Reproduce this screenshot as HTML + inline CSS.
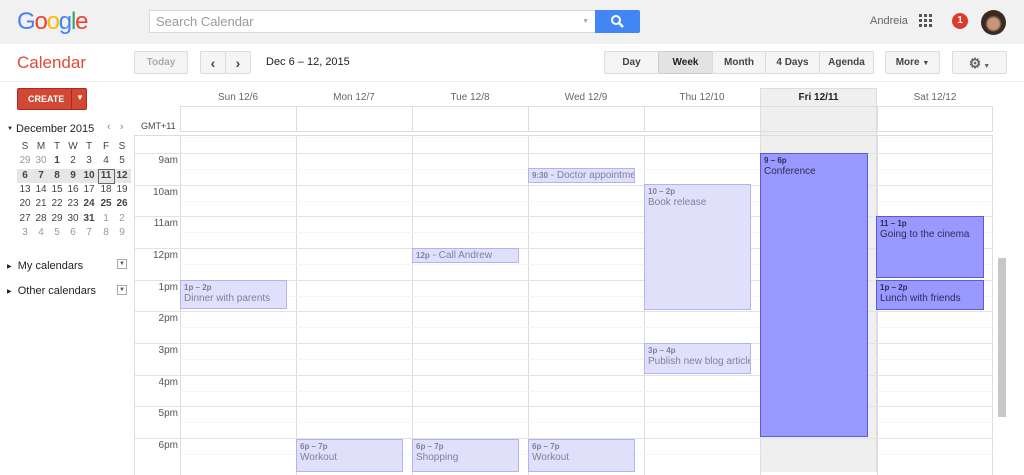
<!DOCTYPE html>
<html><head><meta charset="utf-8"><style>
*{box-sizing:border-box;margin:0;padding:0}
body{width:1024px;height:472px;overflow:hidden;background:#fff;font-family:"Liberation Sans",Arial,sans-serif;font-size:11px;color:#222;position:relative}
.a{position:absolute}
.btn{position:absolute;background:#f5f5f5;border:1px solid #dcdcdc;border-radius:2px;color:#444;font-weight:bold;font-size:10px;text-align:center;line-height:22px}
.ev{position:absolute;border:1px solid;font-size:10px;padding:1px 3px;overflow:hidden;white-space:nowrap;line-height:11px}
.ev b{font-size:8px;display:block}
.mc span{position:absolute;width:16px;text-align:center;font-size:10px}
</style></head><body>
<div class="a" style="left:0;top:0;width:1024px;height:44px;background:#f1f1f1"></div>
<div class="a" style="left:17px;top:8px;font-size:24px;font-family:'Liberation Sans',sans-serif;letter-spacing:-1.2px"><span style="color:#4285f4">G</span><span style="color:#ea4335">o</span><span style="color:#fbbc05">o</span><span style="color:#4285f4">g</span><span style="color:#34a853">l</span><span style="color:#ea4335">e</span></div>
<div class="a" style="left:149px;top:10px;width:447px;height:23px;background:#fff;border:1px solid #d9d9d9;color:#999;font-size:13px;line-height:21px;padding-left:6px">Search Calendar<span style="position:absolute;right:6px;top:0;font-size:7px;color:#aaa">▼</span></div>
<div class="a" style="left:595px;top:10px;width:45px;height:23px;background:#4285f4;border-radius:0 2px 2px 0"><svg width="45" height="23"><circle cx="21" cy="10" r="4" fill="none" stroke="#fff" stroke-width="2"/><path d="M24 13l4 4" stroke="#fff" stroke-width="2.5"/></svg></div>
<div class="a" style="left:870px;top:15px;color:#666;font-size:11px">Andreia</div>
<svg class="a" style="left:919px;top:14px" width="13" height="13"><g fill="#555"><rect x="0" y="0" width="3" height="3"/><rect x="5" y="0" width="3" height="3"/><rect x="10" y="0" width="3" height="3"/><rect x="0" y="5" width="3" height="3"/><rect x="5" y="5" width="3" height="3"/><rect x="10" y="5" width="3" height="3"/><rect x="0" y="10" width="3" height="3"/><rect x="5" y="10" width="3" height="3"/><rect x="10" y="10" width="3" height="3"/></g></svg>
<div class="a" style="left:952px;top:13px;width:16px;height:16px;border-radius:50%;background:#db3b2b;color:#fff;font-weight:bold;font-size:10px;text-align:center;line-height:16px">1</div>
<div class="a" style="left:981px;top:10px;width:25px;height:25px;border-radius:50%;background:radial-gradient(circle at 50% 55%,#c9957a 0 30%,#3a2a22 45%)"></div>
<div class="a" style="left:0;top:81px;width:1024px;height:1px;background:#ebebeb"></div>
<div class="a" style="left:17px;top:53px;color:#dd4b39;font-size:17px">Calendar</div>
<div class="btn" style="left:134px;top:51px;width:54px;height:23px;color:#aaa">Today</div>
<div class="btn" style="left:200px;top:51px;width:26px;height:23px;font-size:14px;color:#444">&#8249;</div>
<div class="btn" style="left:225px;top:51px;width:26px;height:23px;font-size:14px;color:#444">&#8250;</div>
<div class="a" style="left:266px;top:56px;font-size:11px;color:#222">Dec 6 – 12, 2015</div>
<div class="btn" style="left:604px;top:51px;width:55px;height:23px">Day</div>
<div class="btn" style="left:658px;top:51px;width:55px;height:23px;background:#e3e3e3;border-color:#ccc;color:#222">Week</div>
<div class="btn" style="left:712px;top:51px;width:54px;height:23px">Month</div>
<div class="btn" style="left:765px;top:51px;width:55px;height:23px">4 Days</div>
<div class="btn" style="left:819px;top:51px;width:55px;height:23px">Agenda</div>
<div class="btn" style="left:885px;top:51px;width:55px;height:23px">More <span style="font-size:7px">▼</span></div>
<div class="btn" style="left:952px;top:51px;width:55px;height:23px;font-size:14px;color:#666">⚙<span style="font-size:7px"> ▼</span></div>
<div class="a" style="left:17px;top:88px;width:70px;height:22px;background:#d14836;border:1px solid #b0281a;border-radius:2px;color:#fff;font-weight:bold;font-size:9px;line-height:20px;padding-left:10px">CREATE</div>
<div class="a" style="left:71px;top:89px;width:1px;height:20px;background:#b0281a"></div>
<div class="a" style="left:76px;top:93px;color:#fff;font-size:8px">▼</div>
<div class="a" style="left:7px;top:123px;font-size:11px;color:#222"><span style="font-size:6px;vertical-align:2px">▼</span> December 2015</div>
<div class="a" style="left:107px;top:121px;color:#888;font-size:11px">‹&nbsp;&nbsp;&nbsp;›</div>
<div class="a" style="left:17px;top:169px;width:114px;height:14px;background:#e6e6e6"></div>
<div class="a" style="left:98px;top:169px;width:17px;height:15px;border:1px solid #666"></div>
<div class="mc a" style="left:0;top:0;color:#444">
<span style="left:17px;top:141px">S</span><span style="left:33px;top:141px">M</span><span style="left:49px;top:141px">T</span><span style="left:65px;top:141px">W</span><span style="left:81px;top:141px">T</span><span style="left:98px;top:141px">F</span><span style="left:114px;top:141px">S</span>
<span style="left:17px;top:155px;color:#999">29</span><span style="left:33px;top:155px;color:#999">30</span><span style="left:49px;top:155px;font-weight:bold">1</span><span style="left:65px;top:155px">2</span><span style="left:81px;top:155px">3</span><span style="left:98px;top:155px">4</span><span style="left:114px;top:155px">5</span>
<span style="left:17px;top:170px;font-weight:bold">6</span><span style="left:33px;top:170px;font-weight:bold">7</span><span style="left:49px;top:170px;font-weight:bold">8</span><span style="left:65px;top:170px;font-weight:bold">9</span><span style="left:81px;top:170px;font-weight:bold">10</span><span style="left:98px;top:170px;font-weight:bold">11</span><span style="left:114px;top:170px;font-weight:bold">12</span>
<span style="left:17px;top:184px">13</span><span style="left:33px;top:184px">14</span><span style="left:49px;top:184px">15</span><span style="left:65px;top:184px">16</span><span style="left:81px;top:184px">17</span><span style="left:98px;top:184px">18</span><span style="left:114px;top:184px">19</span>
<span style="left:17px;top:198px">20</span><span style="left:33px;top:198px">21</span><span style="left:49px;top:198px">22</span><span style="left:65px;top:198px">23</span><span style="left:81px;top:198px;font-weight:bold">24</span><span style="left:98px;top:198px;font-weight:bold">25</span><span style="left:114px;top:198px;font-weight:bold">26</span>
<span style="left:17px;top:213px">27</span><span style="left:33px;top:213px">28</span><span style="left:49px;top:213px">29</span><span style="left:65px;top:213px">30</span><span style="left:81px;top:213px;font-weight:bold">31</span><span style="left:98px;top:213px;color:#999">1</span><span style="left:114px;top:213px;color:#999">2</span>
<span style="left:17px;top:227px;color:#999">3</span><span style="left:33px;top:227px;color:#999">4</span><span style="left:49px;top:227px;color:#999">5</span><span style="left:65px;top:227px;color:#999">6</span><span style="left:81px;top:227px;color:#999">7</span><span style="left:98px;top:227px;color:#999">8</span><span style="left:114px;top:227px;color:#999">9</span>
</div>
<div class="a" style="left:7px;top:260px;font-size:11px;color:#222"><span style="font-size:6px;vertical-align:1px">▶</span>&nbsp; My calendars</div>
<div class="a" style="left:117px;top:259px;width:10px;height:10px;border:1px solid #aaa;font-size:6px;text-align:center;line-height:9px;color:#555">▼</div>
<div class="a" style="left:7px;top:285px;font-size:11px;color:#222"><span style="font-size:6px;vertical-align:1px">▶</span>&nbsp; Other calendars</div>
<div class="a" style="left:117px;top:285px;width:10px;height:10px;border:1px solid #aaa;font-size:6px;text-align:center;line-height:9px;color:#555">▼</div>
<div class="a" style="left:760px;top:88px;width:117px;height:384px;background:#efefef;border-left:1px solid #ddd;border-right:1px solid #ddd;border-top:1px solid #ddd"></div>
<div id="g"></div>
<div class="a" style="left:141px;top:121px;font-size:9px;color:#444">GMT+11</div>
<div class="a" style="left:998px;top:258px;width:8px;height:159px;background:#c8c8c8"></div>
<script>
var g='',cols=[180,296,412,528,644,760,877,993];
var names=['Sun 12/6','Mon 12/7','Tue 12/8','Wed 12/9','Thu 12/10','Fri 12/11','Sat 12/12'];
for(var i=0;i<7;i++){g+='<div class="a" style="left:'+cols[i]+'px;top:92px;width:'+(cols[i+1]-cols[i])+'px;text-align:center;font-size:10px;color:'+(i==5?'#222;font-weight:bold':'#666')+'">'+names[i]+'</div>';}
g+='<div class="a" style="left:180px;top:106px;width:813px;height:26px;border:1px solid #ddd;'+'"></div>';
g+='<div class="a" style="left:134px;top:135px;width:859px;height:340px;border:1px solid #ddd;border-bottom:none"></div>';
for(var i=1;i<7;i++){g+='<div class="a" style="left:'+cols[i]+'px;top:106px;width:1px;height:26px;background:#ddd"></div>';}
for(var i=0;i<7;i++){g+='<div class="a" style="left:'+cols[i]+'px;top:135px;width:1px;height:340px;background:#ddd"></div>';}
var hrs=['9am','10am','11am','12pm','1pm','2pm','3pm','4pm','5pm','6pm'];
var H=31.67;
for(var h=0;h<10;h++){var y=Math.round(153+h*H);
g+='<div class="a" style="left:134px;top:'+y+'px;width:859px;height:1px;background:#e2e2e2"></div>';
g+='<div class="a" style="left:134px;top:'+(y+2)+'px;width:44px;text-align:right;font-size:10px;color:#555">'+hrs[h]+'</div>';
g+='<div class="a" style="left:180px;top:'+Math.round(y+H/2)+'px;width:813px;height:0;border-top:1px dotted #ececec"></div>';}
g+='<div class="a" style="left:180px;top:137px;width:813px;height:0;border-top:1px dotted #ececec"></div>';
function ev(x,y1,w,h,bg,bd,col,t,n){g+='<div class="ev" style="left:'+x+'px;top:'+y1+'px;width:'+w+'px;height:'+h+'px;background:'+bg+';border-color:'+bd+';color:'+col+'"><b>'+t+'</b>'+n+'</div>';}
var L='#e0e0fb',LB='#b2b2f5',LC='#7f7f9f',D='#9999ff',DB='#5b5bd9',DC='#2c2c5a';
ev(180,280,107,29,L,LB,LC,'1p – 2p','Dinner with parents');
ev(296,439,107,33,L,LB,LC,'6p – 7p','Workout');
ev(412,439,107,33,L,LB,LC,'6p – 7p','Shopping');
ev(412,248,107,15,L,LB,LC,'','<span style="font-size:8px;font-weight:bold">12p</span> - Call Andrew');
ev(528,168,107,15,L,LB,LC,'','<span style="font-size:8px;font-weight:bold">9:30</span> - Doctor appointmen');
ev(528,439,107,33,L,LB,LC,'6p – 7p','Workout');
ev(644,184,107,126,L,LB,LC,'10 – 2p','Book release');
ev(644,343,107,31,L,LB,LC,'3p – 4p','Publish new blog article');
ev(760,153,108,284,D,DB,DC,'9 – 6p','Conference');
ev(876,216,108,62,D,DB,DC,'11 – 1p','Going to the cinema');
ev(876,280,108,30,D,DB,DC,'1p – 2p','Lunch with friends');
document.getElementById('g').innerHTML=g;
</script>
</body></html>
